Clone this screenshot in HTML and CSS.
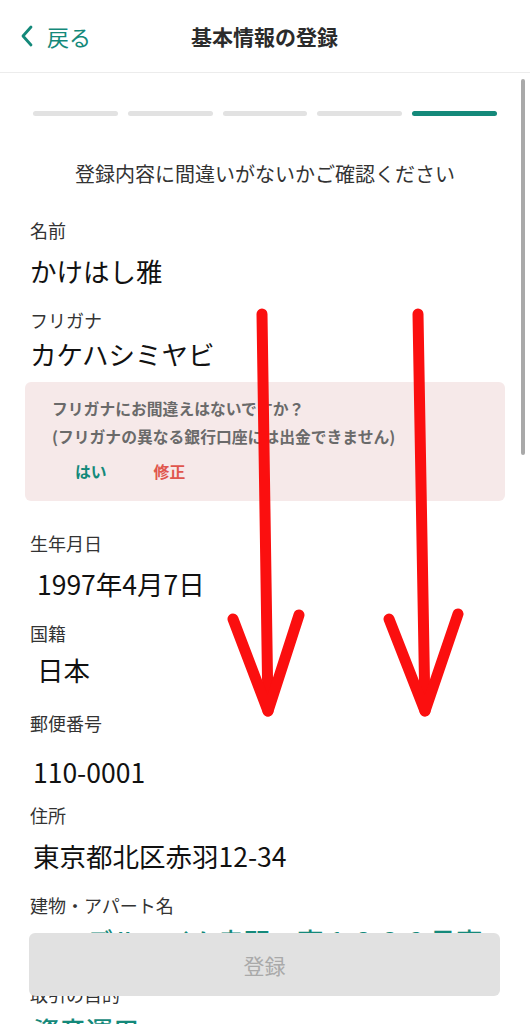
FILE: index.html
```html
<!DOCTYPE html>
<html lang="ja">
  <head>
    <meta charset="UTF-8" />
    <meta name="viewport" content="width=device-width, initial-scale=1.0" />
    <link rel="stylesheet" href="styles.css">
    <title>基本情報の登録</title>
  </head>
  <body>
    <div class="screen">
      <header class="topbar">
        <a class="back" href="#">
          <svg class="chevron" viewBox="0 0 14 24" width="14" height="24">
            <path d="M11 3 L3 12 L11 21" fill="none" stroke="currentColor" stroke-width="2.8" stroke-linecap="round" stroke-linejoin="round" />
          </svg>
          <span>戻る</span>
        </a>
        <h1 class="title">基本情報の登録</h1>
      </header>

      <main class="content">
        <div class="steps">
          <span class="step"></span>
          <span class="step"></span>
          <span class="step"></span>
          <span class="step"></span>
          <span class="step active"></span>
        </div>

        <p class="lead">登録内容に間違いがないかご確認ください</p>

        <dl class="fields">
          <dt class="label first">名前</dt>
          <dd class="value">かけはし雅</dd>

          <dt class="label">フリガナ</dt>
          <dd class="value tight">カケハシミヤビ</dd>
        </dl>

        <div class="notice">
          <p>フリガナにお間違えはないですか？</p>
          <p>(フリガナの異なる銀行口座には出金できません)</p>
          <div class="notice-actions">
            <button class="link green">はい</button>
            <button class="link red">修正</button>
          </div>
        </div>

        <dl class="fields">
          <dt class="label first">生年月日</dt>
          <dd class="value indent">1997年4月7日</dd>

          <dt class="label">国籍</dt>
          <dd class="value indent near">日本</dd>

          <dt class="label wide">郵便番号</dt>
          <dd class="value nudge far">110-0001</dd>

          <dt class="label near">住所</dt>
          <dd class="value nudge">東京都北区赤羽12-34</dd>

          <dt class="label">建物・アパート名</dt>
          <dd class="value accent">エーデルハイム赤羽　壱１００２号室</dd>

          <dt class="label wide">取引の目的</dt>
          <dd class="value accent">資産運用</dd>
        </dl>
      </main>

      <div class="scrollbar"></div>

      <div class="footer">
        <button class="submit" disabled>登録</button>
      </div>

      <svg class="arrows" viewBox="0 0 530 1024" width="530" height="1024">
        <g fill="none" stroke="#fb0f0f" stroke-width="11" stroke-linecap="round" stroke-linejoin="round">
          <path d="M262 314 L268 711" />
          <path d="M233 619 L268 711 L299 615" />
          <path d="M418 314 L425 711" />
          <path d="M389 619 L425 711 L458 614" />
        </g>
      </svg>
    </div>
  </body>
</html>
```

FILE: styles.css
```css
* {
  box-sizing: border-box;
  margin: 0;
  padding: 0;
  --green: #14897a;
  --red: #e0564d;
  --text: #222;
  --gray: #e2e2e2;
}

body {
  font-family: 'Noto Sans CJK JP', 'Noto Sans', sans-serif;
  color: var(--text);
  background-color: white;
}

.screen {
  position: relative;
  height: 1024px;
  overflow: hidden;
}

.topbar {
  display: flex;
  align-items: center;
  height: 73px;
  padding: 0 20px;
  border-bottom: 1px solid #ececec;
}

.back {
  display: flex;
  align-items: center;
  gap: 13px;
  color: var(--green);
  font-size: 22px;
  text-decoration: none;
}

.title {
  flex: 1;
  margin-right: 72px;
  text-align: center;
  font-size: 21px;
  font-weight: bold;
  color: #2b2b2b;
}

.content {
  padding: 38px 30px 0;
}

.steps {
  display: grid;
  grid-template-columns: repeat(5, 1fr);
  gap: 10px;
  padding: 0 3px;
}

.step {
  height: 5px;
  border-radius: 3px;
  background-color: var(--gray);
}

.step.active {
  background-color: var(--green);
}

.lead {
  margin-top: 44px;
  text-align: center;
  font-size: 20px;
  line-height: 28px;
  color: #333;
}

.fields .label {
  margin-top: 20px;
  font-size: 18px;
  line-height: 24px;
  color: #333;
}

.fields .label.first {
  margin-top: 30px;
}

.fields .label.wide {
  margin-top: 24px;
}

.fields .label.near {
  margin-top: 14px;
}

.fields .value {
  margin-top: 12px;
  font-size: 26.5px;
  line-height: 34px;
  color: #111;
}

.value.tight {
  margin-top: 5px;
}

.value.near {
  margin-top: 8px;
}

.value.far {
  margin-top: 20px;
}

.value.indent {
  padding-left: 7px;
}

.value.nudge {
  padding-left: 3px;
}

.value.accent {
  margin-top: 7px;
  padding-left: 3px;
  font-weight: 500;
  color: var(--green);
}

.notice {
  margin: 11px -5px 0;
  padding: 13px 27px 17px;
  border-radius: 6px;
  background-color: #f6e9e9;
  font-size: 15.8px;
  line-height: 28px;
  font-weight: bold;
  color: #6a6a6a;
}

.notice-actions {
  display: flex;
  gap: 47px;
  margin-top: 9px;
  padding-left: 23px;
}

.link {
  border: none;
  background: none;
  font: inherit;
  line-height: 24px;
}

.link.green {
  color: var(--green);
}

.link.red {
  color: var(--red);
}

.scrollbar {
  position: absolute;
  top: 79px;
  right: 5px;
  width: 4px;
  height: 376px;
  border-radius: 2px;
  background-color: #a9a9a9;
}

.footer {
  position: absolute;
  left: 29px;
  right: 30px;
  bottom: 28px;
}

.submit {
  width: 100%;
  height: 63px;
  border: none;
  border-radius: 6px;
  background-color: #e1e1e1;
  color: #a9a9a9;
  font-family: inherit;
  font-size: 21px;
}

.arrows {
  position: absolute;
  top: 0;
  left: 0;
  pointer-events: none;
}
```
